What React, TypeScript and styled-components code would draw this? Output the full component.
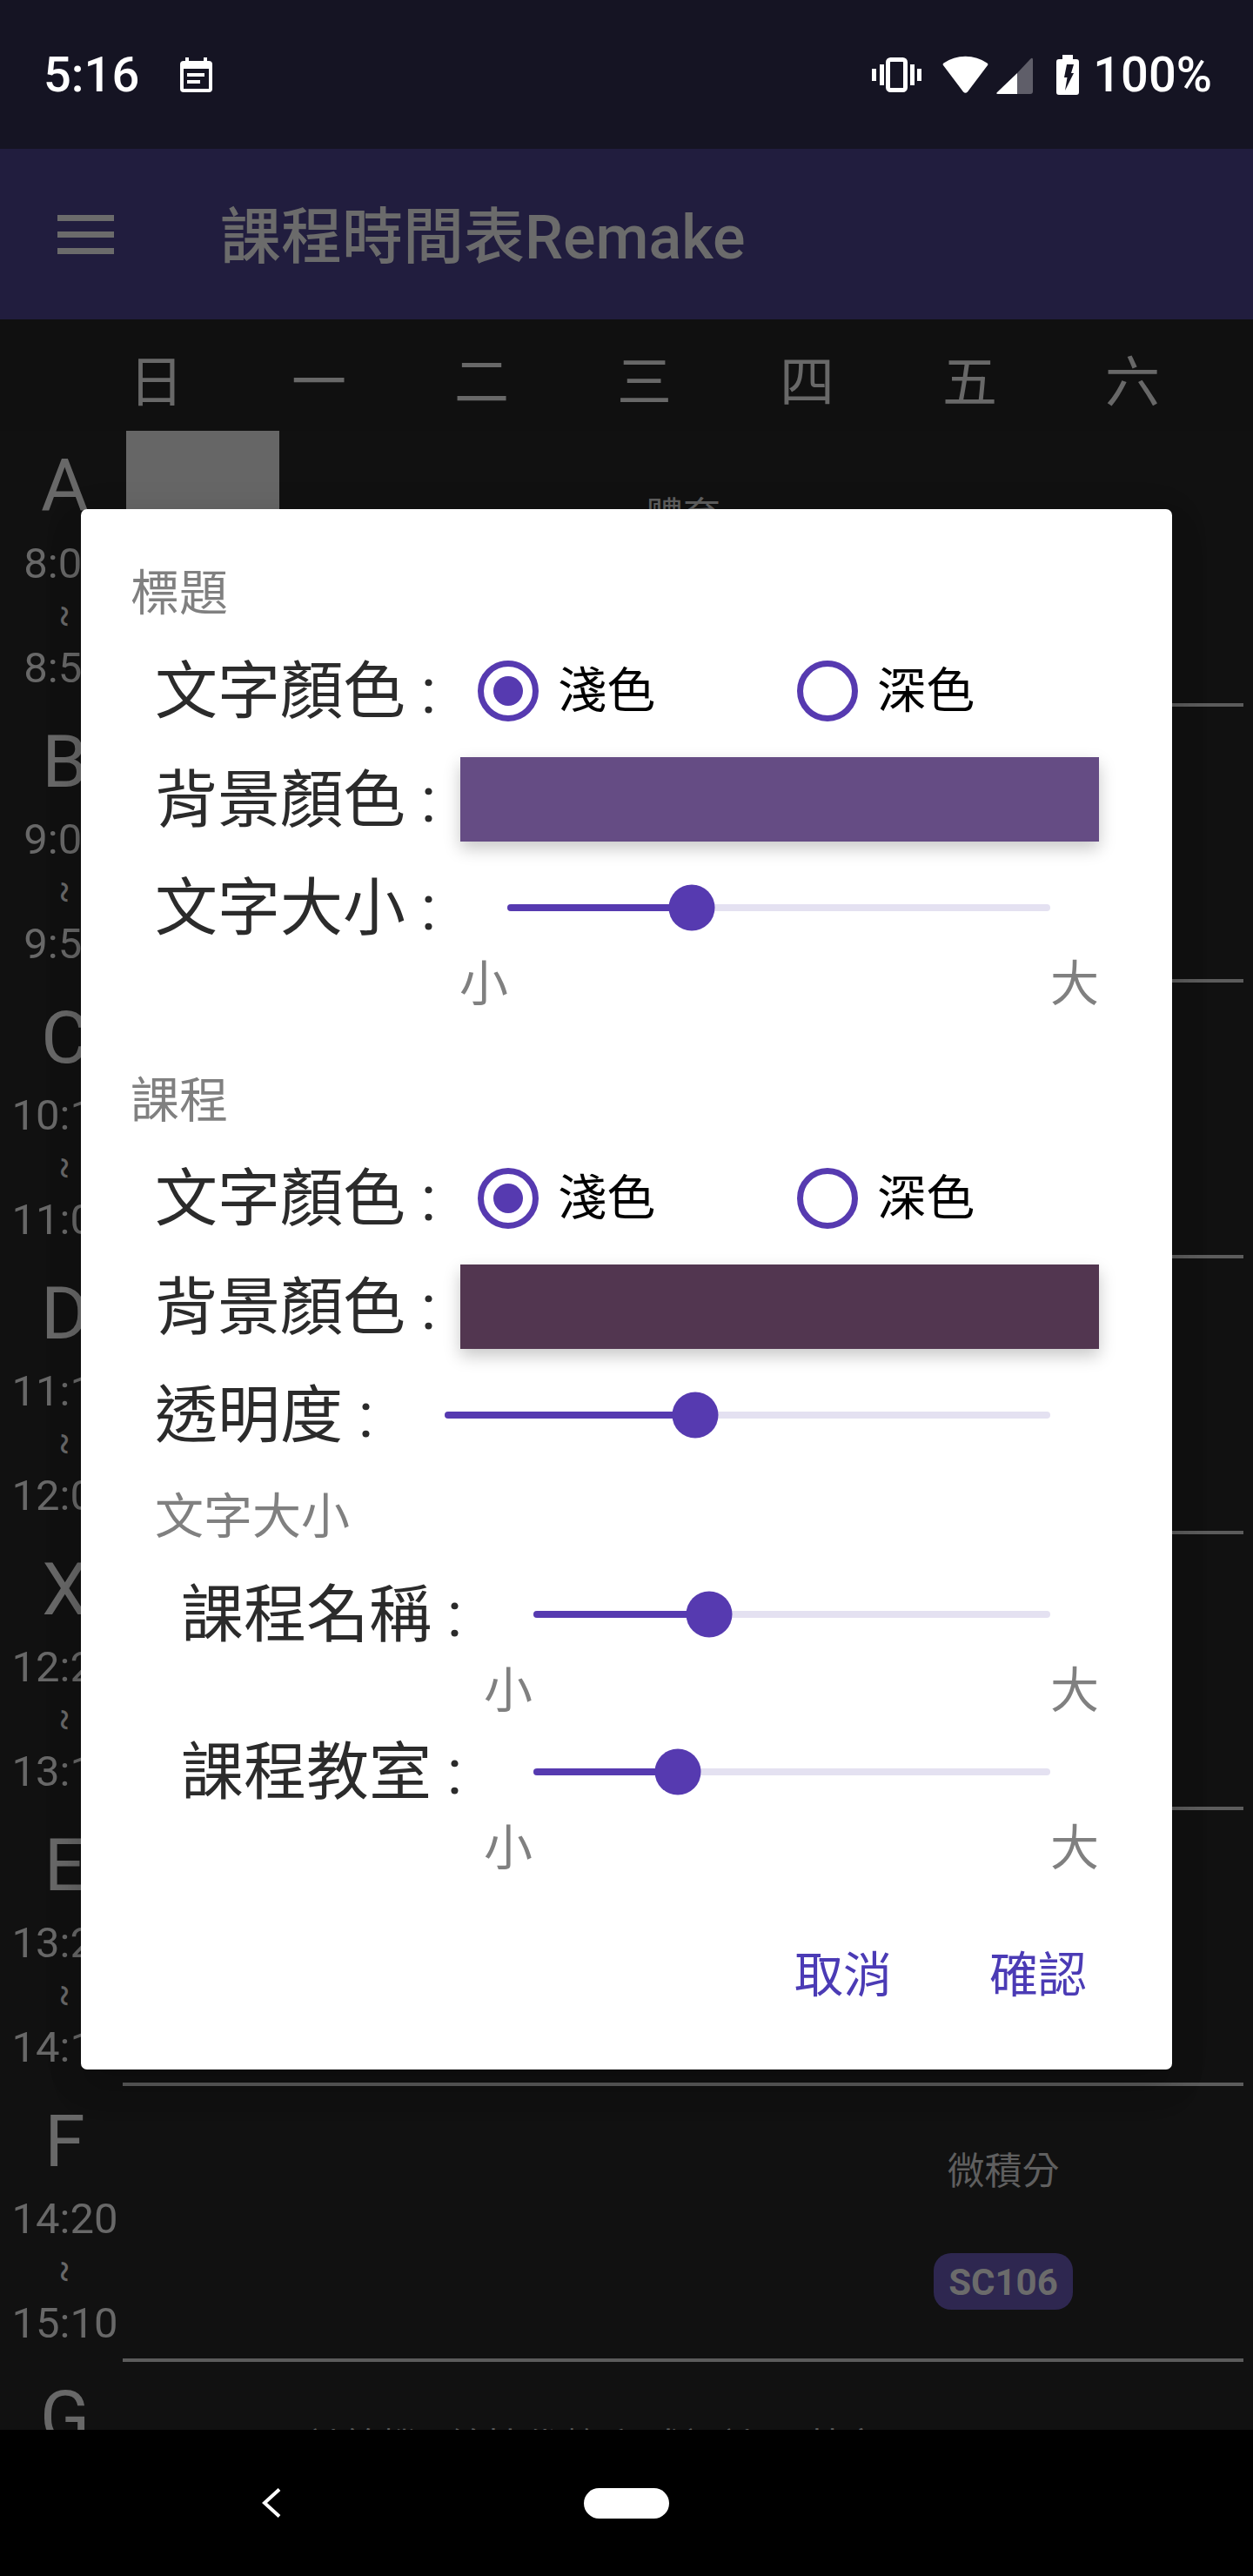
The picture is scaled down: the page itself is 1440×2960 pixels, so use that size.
import React from "react";
import styled, { createGlobalStyle } from "styled-components";

const GlobalStyle = createGlobalStyle`
  html, body {
    margin: 0;
    padding: 0;
    background: #000;
    font-family: Roboto, "Noto Sans CJK TC", sans-serif;
  }
`;

const ACCENT = "#563ab0";
const DIM = "#686868";
const STATUS_BG = "#151423";

const periods = [
  { code: "A", from: "8:00", to: "8:50" },
  { code: "B", from: "9:00", to: "9:50" },
  { code: "C", from: "10:10", to: "11:00" },
  { code: "D", from: "11:10", to: "12:00" },
  { code: "X", from: "12:20", to: "13:10" },
  { code: "E", from: "13:20", to: "14:10" },
  { code: "F", from: "14:20", to: "15:10" },
  { code: "G", from: "15:30", to: "16:20" },
];

const courses: Record<string, { day: number; name: string; room?: string; filled?: boolean }[]> = {
  A: [{ day: 0, name: "", filled: true }, { day: 3, name: "體育" }],
  F: [{ day: 5, name: "微積分", room: "SC106" }],
  G: [
    { day: 1, name: "計算機" },
    { day: 2, name: "線性代數" },
    { day: 3, name: "程式設計" },
    { day: 4, name: "英文" },
  ],
};

export default function App() {
  return (
    <Screen>
      <GlobalStyle />
      <StatusBar>
        <Clock>5:16</Clock>
        <CalendarIcon />
        <StatusRight>
          <VibrateIcon />
          <WifiIcon />
          <SignalIcon />
          <BatteryIcon />
          <BatteryText>100%</BatteryText>
        </StatusRight>
      </StatusBar>

      <AppBar>
        <Hamburger>
          <span />
          <span />
          <span />
        </Hamburger>
        <AppTitle>課程時間表Remake</AppTitle>
      </AppBar>

      <DayHeader>
        {["日", "一", "二", "三", "四", "五", "六"].map((d) => (
          <Day key={d}>{d}</Day>
        ))}
      </DayHeader>

      <Table>
        {periods.map((p) => (
          <Period key={p.code}>
            <TimeColumn>
              <PeriodCode>{p.code}</PeriodCode>
              <TimeText>{p.from}</TimeText>
              <Tilde>~</Tilde>
              <TimeText>{p.to}</TimeText>
            </TimeColumn>
            <PeriodBody>
              {(courses[p.code] || []).map((c) =>
                c.filled ? (
                  <FilledCell key={c.day} $day={c.day} />
                ) : (
                  <CourseCell key={c.day} $day={c.day}>
                    <CourseName>{c.name}</CourseName>
                    {c.room && <RoomChip>{c.room}</RoomChip>}
                  </CourseCell>
                )
              )}
            </PeriodBody>
          </Period>
        ))}
      </Table>

      <NavBar>
        <BackIcon />
        <HomePill />
      </NavBar>

      <Overlay>
        <Dialog>
          <SectionTitle>標題</SectionTitle>
          <Group>
            <TextColorRow />
            <SwatchRow>
              <Label>背景顏色 :</Label>
              <Swatch $color="#654c84" />
            </SwatchRow>
            <Row>
              <Label>文字大小 :</Label>
              <Slider value={33.9} />
            </Row>
          </Group>
          <Scale $left={378}>
            <span>小</span>
            <span>大</span>
          </Scale>

          <SectionTitle $spaced>課程</SectionTitle>
          <Group>
            <TextColorRow />
            <SwatchRow>
              <Label>背景顏色 :</Label>
              <Swatch $color="#523650" />
            </SwatchRow>
            <Row>
              <Label>透明度 :</Label>
              <Slider value={41.4} />
            </Row>
          </Group>
          <SubTitle>文字大小</SubTitle>
          <Nested>
            <Row>
              <Label>課程名稱 :</Label>
              <Slider value={33.9} />
            </Row>
            <Scale $left={348}>
              <span>小</span>
              <span>大</span>
            </Scale>
            <Row>
              <Label>課程教室 :</Label>
              <Slider value={27.9} />
            </Row>
            <Scale $left={348}>
              <span>小</span>
              <span>大</span>
            </Scale>
          </Nested>

          <Actions>
            <ActionButton>取消</ActionButton>
            <ActionButton>確認</ActionButton>
          </Actions>
        </Dialog>
      </Overlay>
    </Screen>
  );
}

function TextColorRow() {
  return (
    <Row>
      <Label>文字顏色 :</Label>
      <RadioOption>
        <Radio $checked />
        <RadioText>淺色</RadioText>
      </RadioOption>
      <RadioOption>
        <Radio />
        <RadioText>深色</RadioText>
      </RadioOption>
    </Row>
  );
}

function Slider({ value }: { value: number }) {
  return (
    <SliderBox>
      <Track>
        <Fill $value={value} />
        <Thumb $value={value} />
      </Track>
    </SliderBox>
  );
}

function CalendarIcon() {
  return (
    <CalendarSvg width="37" height="40" viewBox="0 0 37 40">
      <rect x="6" y="0" width="4" height="6" fill="#fff" />
      <rect x="27" y="0" width="4" height="6" fill="#fff" />
      <rect x="0" y="4" width="37" height="36" rx="4" fill="#fff" />
      <rect x="4" y="13" width="29" height="23" fill={STATUS_BG} />
      <rect x="8" y="18" width="20" height="4" fill="#fff" />
      <rect x="8" y="26" width="15" height="4" fill="#fff" />
    </CalendarSvg>
  );
}

function VibrateIcon() {
  return (
    <svg width="57" height="40" viewBox="0 0 57 40">
      <rect x="0" y="13" width="5" height="14" fill="#fff" />
      <rect x="9" y="8" width="5" height="24" fill="#fff" />
      <rect x="18.5" y="2.5" width="20" height="35" rx="3" fill="none" stroke="#fff" strokeWidth="5" />
      <rect x="44" y="8" width="5" height="24" fill="#fff" />
      <rect x="52" y="13" width="5" height="14" fill="#fff" />
    </svg>
  );
}

function WifiIcon() {
  return (
    <svg width="53" height="43" viewBox="0 0 53 43">
      <path d="M1 11 Q0 9.500 1.500 8.500 A44 44 0 0 1 51.500 8.500 Q53 9.500 52 11 L29 41.500 Q26.500 44 24 41.500 Z" fill="#fff" />
    </svg>
  );
}

function SignalIcon() {
  return (
    <svg width="42" height="42" viewBox="0 0 42 42">
      <path d="M24 18 L39 2 Q42 -1 42 3 V39 Q42 42 39 42 H24 Z" fill="#5f5e69" />
      <path d="M24 18 V42 H2 Q-1 42 1 40 Z" fill="#fff" />
    </svg>
  );
}

function BatteryIcon() {
  return (
    <svg width="26" height="46" viewBox="0 0 26 46">
      <path d="M7 0 H19 V5 H23 Q26 5 26 8 V43 Q26 46 23 46 H3 Q0 46 0 43 V8 Q0 5 3 5 H7 Z" fill="#fff" />
      <path d="M12 11 H20 L17 21 H20 L10 41 L12.500 26 H9 Z" fill={STATUS_BG} />
    </svg>
  );
}

function BackIcon() {
  return (
    <svg width="22" height="34" viewBox="0 0 22 34">
      <polyline points="20,1.500 3,17 20,32.500" fill="none" stroke="#fff" strokeWidth="4" />
    </svg>
  );
}

const Screen = styled.div`
  position: relative;
  width: 1440px;
  height: 2960px;
  display: flex;
  flex-direction: column;
  overflow: hidden;
  background: #111;
`;

const StatusBar = styled.div`
  flex: 0 0 171px;
  display: flex;
  align-items: center;
  padding: 0 47px 0 50px;
  background: ${STATUS_BG};
  color: #fff;
`;

const Clock = styled.div`
  font-size: 56px;
  font-weight: 500;
  line-height: 66px;
`;

const CalendarSvg = styled.svg`
  margin-left: 47px;
`;

const StatusRight = styled.div`
  margin-left: auto;
  display: flex;
  align-items: center;
  gap: 24px;

  & svg:nth-child(3) {
    margin-left: -15px;
    margin-top: 3px;
  }

  & svg:nth-child(4) {
    margin-left: 3px;
  }
`;

const BatteryText = styled.div`
  font-size: 56px;
  font-weight: 500;
  line-height: 66px;
  margin-left: -8px;
`;

const AppBar = styled.header`
  flex: 0 0 196px;
  display: flex;
  align-items: center;
  padding-left: 66px;
  background: #211d3e;
  color: #6b6b6b;
`;

const Hamburger = styled.div`
  width: 65px;
  display: flex;
  flex-direction: column;
  gap: 12px;

  & span {
    height: 7px;
    background: #6b6b6b;
  }
`;

const AppTitle = styled.h1`
  margin: 8px 0 0 122px;
  font-size: 70px;
  line-height: 90px;
  font-weight: 500;
`;

const DayHeader = styled.div`
  flex: 0 0 128px;
  display: grid;
  grid-template-columns: repeat(7, 187px);
  align-items: center;
  padding: 0 0 0 86px;
  background: #101010;
`;

const Day = styled.div`
  text-align: center;
  font-size: 63px;
  line-height: 80px;
  color: ${DIM};
  padding-top: 18px;
`;

const Table = styled.div`
  flex: 1;
  overflow: hidden;
`;

const Period = styled.div`
  height: 317px;
  display: flex;
`;

const TimeColumn = styled.div`
  flex: 0 0 133px;
  margin-left: 8px;
  display: flex;
  flex-direction: column;
  align-items: center;
  color: ${DIM};
`;

const PeriodCode = styled.div`
  font-size: 84px;
  line-height: 100px;
  margin-top: 14px;
  margin-bottom: -2px;
`;

const TimeText = styled.div`
  font-size: 49px;
  line-height: 60px;
  margin-top: 11px;
  white-space: nowrap;
`;

const Tilde = styled.div`
  font-size: 40px;
  line-height: 60px;
  height: 60px;
  margin-bottom: -11px;
  transform: rotate(90deg);
`;

const PeriodBody = styled.div`
  flex: 1;
  margin-right: 11px;
  display: grid;
  grid-template-columns: repeat(7, 1fr);
  border-bottom: 4px solid #5c5c5c;
`;

const FilledCell = styled.div<{ $day: number }>`
  grid-column: ${(p) => p.$day + 1};
  grid-row: 1;
  margin: 0 4px;
  background: #666;
`;

const CourseCell = styled.div<{ $day: number }>`
  grid-column: ${(p) => p.$day + 1};
  grid-row: 1;
  display: flex;
  flex-direction: column;
  align-items: center;
  padding-top: 70px;
`;

const CourseName = styled.div`
  font-size: 43px;
  line-height: 56px;
  color: #5f5f5f;
  white-space: nowrap;
`;

const RoomChip = styled.div`
  margin-top: 66px;
  width: 160px;
  height: 65px;
  box-sizing: border-box;
  padding-top: 3px;
  border-radius: 20px;
  background: #2e2750;
  color: #6b6b6b;
  font-size: 42px;
  font-weight: 700;
  line-height: 62px;
  text-align: center;
`;

const NavBar = styled.nav`
  flex: 0 0 168px;
  display: flex;
  align-items: center;
  gap: 348px;
  padding-left: 301px;
  background: #000;
`;

const HomePill = styled.div`
  width: 98px;
  height: 35px;
  border-radius: 18px;
  background: #fff;
`;

const Overlay = styled.div`
  position: absolute;
  inset: 0;
  display: flex;
  justify-content: center;
  align-items: flex-start;
  padding-top: 585px;
`;

const Dialog = styled.div`
  width: 1254px;
  height: 1793px;
  box-sizing: border-box;
  padding: 59px 84px 0 57px;
  background: #fff;
  border-radius: 7px;
  box-shadow: 0 24px 38px rgba(0, 0, 0, 0.14), 0 9px 46px rgba(0, 0, 0, 0.12);
  display: flex;
  flex-direction: column;
`;

const SectionTitle = styled.div<{ $spaced?: boolean }>`
  font-size: 56px;
  line-height: 76px;
  color: #808080;
  margin-top: ${(p) => (p.$spaced ? "53px" : "0")};
`;

const SubTitle = styled.div`
  font-size: 56px;
  line-height: 76px;
  color: #808080;
  margin: 29px 0 0 28px;
`;

const Group = styled.div`
  display: flex;
  flex-direction: column;
  gap: 26px;
  margin: 24px 0 0 28px;
`;

const Nested = styled.div`
  margin: 24px 0 0 58px;
  display: flex;
  flex-direction: column;
`;

const Row = styled.div`
  min-height: 100px;
  display: flex;
  align-items: center;
`;

const SwatchRow = styled(Row)`
  min-height: 97px;
`;

const Label = styled.div`
  flex: none;
  padding-right: 28px;
  font-size: 72px;
  line-height: 97px;
  color: #2b2b2b;
  white-space: pre;

  ${SwatchRow} > & {
    padding-top: 3px;
    line-height: 94px;
  }
`;

const RadioOption = styled.div`
  flex: 0 0 367px;
  display: flex;
  align-items: center;
  gap: 22px;

  ${Label} + & {
    margin-left: 20px;
  }
`;

const Radio = styled.span<{ $checked?: boolean }>`
  width: 70px;
  height: 70px;
  box-sizing: border-box;
  border: 7px solid ${ACCENT};
  border-radius: 50%;
  display: flex;
  align-items: center;
  justify-content: center;

  &::after {
    content: "";
    display: ${(p) => (p.$checked ? "block" : "none")};
    width: 34px;
    height: 34px;
    border-radius: 50%;
    background: ${ACCENT};
  }
`;

const RadioText = styled.span`
  font-size: 56px;
  line-height: 70px;
  color: #000;
`;

const Swatch = styled.div<{ $color: string }>`
  flex: 1;
  height: 97px;
  background: ${(p) => p.$color};
  box-shadow: 0 8px 18px rgba(0, 0, 0, 0.22);
`;

const SliderBox = styled.div`
  flex: 1;
  padding: 0 56px 0 54px;
`;

const Track = styled.div`
  position: relative;
  height: 8px;
  border-radius: 4px;
  background: #e4e1f1;
`;

const Fill = styled.div<{ $value: number }>`
  width: ${(p) => p.$value}%;
  height: 100%;
  border-radius: 4px 0 0 4px;
  background: ${ACCENT};
`;

const Thumb = styled.div<{ $value: number }>`
  position: absolute;
  top: 50%;
  left: ${(p) => p.$value}%;
  width: 53px;
  height: 53px;
  border-radius: 50%;
  background: ${ACCENT};
  transform: translate(-50%, -50%);
`;

const Scale = styled.div<{ $left: number }>`
  display: flex;
  justify-content: space-between;
  margin-bottom: 5px;
  padding-left: ${(p) => p.$left}px;
  font-size: 56px;
  line-height: 76px;
  color: #808080;
`;

const Actions = styled.div`
  margin-top: 65px;
  display: flex;
  justify-content: flex-end;
  gap: 112px;
  padding-right: 14px;
`;

const ActionButton = styled.button`
  padding: 0;
  border: none;
  background: none;
  font: inherit;
  font-size: 56px;
  line-height: 76px;
  color: #4b3bb5;
`;
